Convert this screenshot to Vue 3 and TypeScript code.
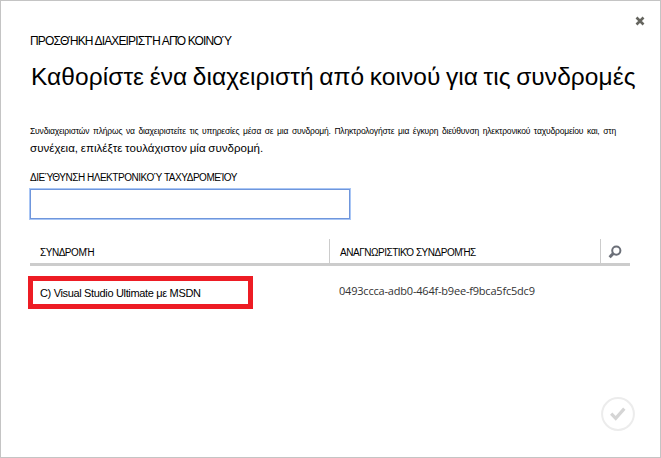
<script setup lang="ts">
import { ref } from 'vue'

interface Subscription {
  name: string
  id: string
}

const email = ref<string>('')
const subscriptions: Subscription[] = [
  { name: 'C) Visual Studio Ultimate με MSDN', id: '0493ccca-adb0-464f-b9ee-f9bca5fc5dc9' },
]
</script>

<template>
  <main class="dialog">
    <button class="close" aria-label="Κλείσιμο">
      <svg width="10" height="10" viewBox="0 0 10 10"><path d="M1.5 1.5 8.5 8.5M8.5 1.5 1.5 8.5" /></svg>
    </button>
    <div class="eyebrow"><span>ΠΡΟΣΘΉΚΗ ΔΙΑΧΕΙΡΙΣΤΉ ΑΠΌ ΚΟΙΝΟΎ</span></div>
    <h1><span>Καθορίστε ένα διαχειριστή από κοινού για τις συνδρομές</span></h1>
    <p class="intro">
      <span class="first">Συνδιαχειριστών πλήρως να διαχειριστείτε τις υπηρεσίες μέσα σε μια συνδρομή. Πληκτρολογήστε μια έγκυρη διεύθυνση ηλεκτρονικού ταχυδρομείου και, στη</span>
      <span class="second">συνέχεια, επιλέξτε τουλάχιστον μία συνδρομή.</span>
    </p>
    <label for="email"><span>ΔΙΕΎΘΥΝΣΗ ΗΛΕΚΤΡΟΝΙΚΟΎ ΤΑΧΥΔΡΟΜΕΊΟΥ</span></label>
    <input id="email" v-model="email" type="text" />
    <section class="table">
      <div class="head">
        <div class="cell name"><span class="h-name">ΣΥΝΔΡΟΜΉ</span></div>
        <div class="cell ident"><span class="h-id">ΑΝΑΓΝΩΡΙΣΤΙΚΌ ΣΥΝΔΡΟΜΉΣ</span></div>
        <div class="cell search">
          <svg width="14" height="14" viewBox="0 0 14 14"><circle cx="8.3" cy="5.6" r="4.1" /><path d="M5.4 8.4 1.6 12.2" /></svg>
        </div>
      </div>
      <div v-for="item in subscriptions" :key="item.id" class="row">
        <div class="highlight"><span>{{ item.name }}</span></div>
        <div class="guid"><span>{{ item.id }}</span></div>
      </div>
    </section>
    <button class="confirm" aria-label="ΟΚ">
      <svg width="34" height="34" viewBox="0 0 34 34"><circle cx="17" cy="17" r="15.9" /><path d="M10.2 16.7 14.7 21.3 23.3 11.6" /></svg>
    </button>
  </main>
</template>

<style scoped>
.dialog {
  box-sizing: border-box;
  width: 661px;
  height: 458px;
  padding: 0 30px 0 29px;
  border: 1px solid #c4c4c4;
  background: #fff;
  color: #000;
  font-family: "Liberation Sans", Arial, sans-serif;
  display: flex;
  flex-direction: column;
  overflow: hidden;
  white-space: nowrap;
}
button { padding: 0; border: 0; background: none; }
svg { display: block; fill: none; }
.close { align-self: flex-end; width: 10px; height: 10px; margin: 15px -15px 0 0; }
.close path { stroke: #65655f; stroke-width: 2.6; }
.eyebrow { height: 20px; margin-top: 5px; line-height: 20px; font-size: 12px; letter-spacing: -0.85px; }
h1 { height: 32px; margin: 10px 0 0 1px; line-height: 32px; font-size: 24.5px; font-weight: 400; letter-spacing: 0.06px; word-spacing: -1.3px; }
.intro { margin: 30px 0 0; display: flex; flex-direction: column; }
.first { height: 16px; line-height: 16px; font-size: 8.5px; width: 586px; white-space: normal; text-align: justify; text-align-last: justify; letter-spacing: -0.17px; }
.second { height: 20px; line-height: 18px; font-size: 11.5px; letter-spacing: 0.03px; word-spacing: -0.5px; }
label { height: 16px; margin-top: 11px; line-height: 16px; font-size: 10px; letter-spacing: -0.47px; }
input {
  box-sizing: border-box;
  width: 320px;
  height: 30px;
  margin: 3px 0 0;
  padding: 4px 8px;
  border: 1px solid #6f96dc;
  border-radius: 0;
  box-shadow: 0 0 0 1px #a9c6f5;
  outline: none;
  background: #fff;
}
.table { margin-top: 20px; width: 600px; }
.head { display: flex; height: 24px; border-bottom: 3px solid #ccc; }
.cell { box-sizing: border-box; line-height: 27px; font-size: 10px; }
.name { width: 300px; padding-left: 10px; border-right: 1px solid #ccc; }
.ident { width: 271px; padding-left: 10px; border-right: 1px solid #ccc; }
.h-name, .h-id { letter-spacing: -0.47px; }
.search { width: 29px; padding: 6px 0 0 7px; }
.search circle, .search path { stroke: #6b6f78; stroke-width: 2; }
.search path { stroke-width: 3; }
.row { display: flex; margin-top: 10px; }
.highlight {
  box-sizing: border-box;
  width: 225px;
  height: 33px;
  margin-left: -2px;
  padding-left: 7px;
  border: 5px solid #ed1c24;
  line-height: 24px;
  font-size: 11px;
  letter-spacing: -0.34px;
}
.guid { margin-left: 86px; line-height: 30px; font-family: "Open Sans", sans-serif; font-size: 11px; letter-spacing: -0.2px; color: #333; }
.confirm { align-self: flex-end; width: 34px; height: 34px; margin: 88px -5px 0 0; }
.confirm circle { stroke: #ececec; stroke-width: 2; }
.confirm path { stroke: #d5d5d5; stroke-width: 3.2; }
</style>
